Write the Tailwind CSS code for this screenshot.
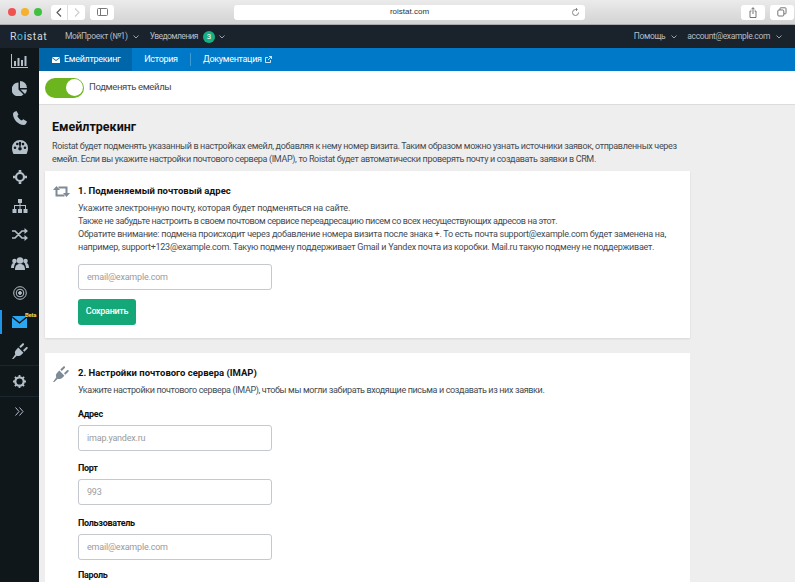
<!DOCTYPE html>
<html lang="ru">
<head>
  <meta charset="UTF-8">
  <title>Roistat</title>
  <script src="https://cdn.jsdelivr.net/npm/@tailwindcss/browser@4"></script>
</head>
<body class="h-[582px] w-[795px] overflow-hidden bg-[#eeeeee] font-['Roboto',sans-serif] text-[9px] tracking-[-0.3px] text-[#444b52]">
  <!-- safari bar -->
  <div class="flex h-[25px] items-center border-b border-[#aaa] bg-gradient-to-b from-[#ebebeb] to-[#d3d3d3] pl-[8px]">
    <div class="flex gap-[5px]">
      <span class="h-[8px] w-[8px] rounded-full bg-[#f0524f]"></span>
      <span class="h-[8px] w-[8px] rounded-full bg-[#f5b02e]"></span>
      <span class="h-[8px] w-[8px] rounded-full bg-[#3fc13f]"></span>
    </div>
    <div class="ml-[9px] flex h-[15px] w-[34px] rounded-[3px] bg-white">
      <span class="flex w-1/2 items-center justify-center border-r border-[#ddd]"><svg width="6" height="9" viewBox="0 0 6 9" fill="none" stroke="#555" stroke-width="1.1"><path d="M5 .5 1 4.500l4 4"/></svg></span>
      <span class="flex w-1/2 items-center justify-center"><svg width="6" height="9" viewBox="0 0 6 9" fill="none" stroke="#ccc" stroke-width="1.1"><path d="M1 .5l4 4-4 4"/></svg></span>
    </div>
    <div class="ml-[5px] flex h-[15px] w-[24px] items-center justify-center rounded-[3px] bg-white">
      <svg width="11" height="8" viewBox="0 0 11 8" fill="none" stroke="#777"><rect x=".5" y=".5" width="10" height="7" rx="1"/><path d="M3.500 .5v7"/></svg>
    </div>
    <div class="relative ml-[120px] flex h-[15px] w-[351px] items-center justify-center rounded-[3px] bg-white font-['Liberation_Sans',sans-serif] text-[8px] tracking-normal text-[#333]">
      roistat.com
      <svg class="absolute right-[5px] top-[3px]" width="9" height="9" viewBox="0 0 9 9" fill="none" stroke="#777" stroke-width=".9"><path d="M7.500 4.500a3 3 0 1 1-3-3h1.500M5 0l1.300 1.500L5 3"/></svg>
    </div>
    <div class="ml-[156px] flex h-[15px] w-[24px] items-center justify-center rounded-[3px] bg-white">
      <svg width="8" height="11" viewBox="0 0 8 11" fill="none" stroke="#666" stroke-width=".9"><path d="M2.500 4H1v6.500h6V4H5.500M4 7V.8M2.400 2.300 4 .7l1.600 1.600"/></svg>
    </div>
    <div class="ml-[5px] flex h-[15px] w-[24px] items-center justify-center rounded-[3px] bg-white">
      <svg width="10" height="10" viewBox="0 0 10 10" fill="none" stroke="#666" stroke-width=".9"><rect x=".8" y="3" width="6" height="6" rx="1"/><path d="M3 3V1.500a.7.7 0 0 1 .7-.7h4.600a.7.7 0 0 1 .7.7v4.600a.7.7 0 0 1-.7.7H7"/></svg>
    </div>
  </div>

  <!-- top nav -->
  <div class="flex h-[23px] items-center bg-[#1a222b] text-[8.5px] tracking-[-0.35px] text-[#b6bcc2]">
    <div class="ml-[10px] w-[55px] text-[10.5px] tracking-[.6px] text-[#d5d9dc]">R<span class="text-[#35b6e8]">o</span>istat</div>
    <div class="flex items-center gap-[5px]">МойПроект (№1)
      <svg width="6" height="4" viewBox="0 0 6 4" fill="none" stroke="#9aa2a9"><path d="M.5.5 3 3 5.500.5"/></svg>
    </div>
    <div class="ml-[11px] flex items-center tracking-[-0.6px]">Уведомления
      <span class="ml-[5px] flex h-[12px] w-[12px] items-center justify-center rounded-full bg-[#16b085] text-[8px] text-white">3</span>
      <svg class="ml-[4px]" width="6" height="4" viewBox="0 0 6 4" fill="none" stroke="#9aa2a9"><path d="M.5.5 3 3 5.500.5"/></svg>
    </div>
    <div class="ml-auto flex items-center gap-[6px]">Помощь
      <svg width="6" height="4" viewBox="0 0 6 4" fill="none" stroke="#9aa2a9"><path d="M.5.5 3 3 5.500.5"/></svg>
    </div>
    <div class="ml-[10px] mr-[13px] flex items-center gap-[6px]">account@example.com
      <svg width="6" height="4" viewBox="0 0 6 4" fill="none" stroke="#9aa2a9"><path d="M.5.5 3 3 5.500.5"/></svg>
    </div>
  </div>

  <div class="flex h-[534px]">
    <!-- sidebar -->
    <div class="flex w-[39px] shrink-0 flex-col items-center bg-[#10171b] text-[#b4c0c9]">
      <div class="flex h-[26px] items-center">
        <svg width="17" height="14" viewBox="0 0 17 14" fill="currentColor"><path d="M0 0h1v13h16v1H0z"/><path d="M3 7h2v5H3zM6.500 4h2v8h-2zM10 6h2v6h-2zM13.500 2h2v10h-2z"/></svg>
      </div>
      <div class="flex h-[29px] items-center">
        <svg width="15" height="15" viewBox="0 0 15 15" fill="currentColor"><path d="M6.500 1.500v7l5 5A7 7 0 1 1 6.500 1.500z"/><path d="M8 0a7 7 0 0 1 7 7H8z"/><path d="M8.500 8.500H15a7 7 0 0 1-2 4.500z"/></svg>
      </div>
      <div class="flex h-[29px] items-center">
        <svg width="14" height="14" viewBox="0 0 14 14" fill="currentColor"><path d="M3.500 0 5.500 3.500 4.300 5c.8 1.800 2.400 3.500 4.500 4.500L10.200 8.300 14 10.500c-.4 1.700-1.600 3.500-3.200 3.500C5 14 0 8 0 3 0 1.500 1.800.3 3.500 0z"/></svg>
      </div>
      <div class="flex h-[30px] items-center">
        <svg width="16" height="14" viewBox="0 0 16 14" fill="currentColor"><path fill-rule="evenodd" d="M8 0a8 8 0 0 1 8 8c0 2.300-.7 4.300-1.500 6h-13C.7 12.300 0 10.300 0 8a8 8 0 0 1 8-8zM3 6.500a1.300 1.300 0 1 0 0 2.600 1.300 1.300 0 0 0 0-2.600zm2.300-3.800a1.300 1.300 0 1 0 0 2.600 1.300 1.300 0 0 0 0-2.600zM8 7a1.800 1.800 0 1 0 0 3.600A1.800 1.800 0 0 0 8 7zm0-5.200a1.200 1.200 0 0 0-1.200 1.200L7.500 7h1L9.200 3A1.200 1.200 0 0 0 8 1.800zm3 1a1.300 1.300 0 1 0 0 2.600 1.300 1.300 0 0 0 0-2.600zm2 3.700a1.300 1.300 0 1 0 0 2.600 1.300 1.300 0 0 0 0-2.600z"/></svg>
      </div>
      <div class="flex h-[29px] items-center">
        <svg width="14" height="14" viewBox="0 0 14 14" fill="none" stroke="currentColor" stroke-width="2.200"><circle cx="7" cy="7" r="4"/><path d="M7 0v2.500M7 11.500V14M0 7h2.500M11.500 7H14" stroke-width="2.600"/></svg>
      </div>
      <div class="flex h-[29px] items-center">
        <svg width="16" height="14" viewBox="0 0 16 14" fill="currentColor"><path d="M6 0h4v4H8.500v2H14v4h1.500v4h-4v-4H13V7H8.500v3H10v4H6v-4h1.500V7H3v3h1.500v4h-4v-4H2V6h5.500V4H6z"/></svg>
      </div>
      <div class="flex h-[29px] items-center">
        <svg width="16" height="13" viewBox="0 0 16 13" fill="none" stroke="currentColor" stroke-width="1.700"><path d="M0 3h3l7 7h3M0 10h3l7-7h3"/><path d="M12.500 0 16 3l-3.500 3zM12.500 7 16 10l-3.500 3z" fill="currentColor" stroke="none"/></svg>
      </div>
      <div class="flex h-[29px] items-center">
        <svg width="18" height="13" viewBox="0 0 18 13" fill="currentColor"><circle cx="9" cy="3.500" r="3.200"/><path d="M4 13c0-4 1.500-6 5-6s5 2 5 6z"/><circle cx="3.500" cy="4" r="2.300"/><circle cx="14.500" cy="4" r="2.300"/><path d="M0 11c0-3 1-5 3-5 .5 0 1 .2 1.300.4C3.500 7.500 3 9 3 11zM18 11c0-3-1-5-3-5-.5 0-1 .2-1.300.4.800 1.100 1.300 2.600 1.300 4.600z"/></svg>
      </div>
      <div class="flex h-[29px] items-center">
        <svg width="14" height="14" viewBox="0 0 14 14" fill="none" stroke="currentColor"><circle cx="7" cy="7" r="6.300"/><circle cx="7" cy="7" r="3.800"/><circle cx="7" cy="7" r="1.400" fill="currentColor"/></svg>
      </div>
      <div class="relative flex h-[30px] w-full items-center justify-center">
        <span class="absolute left-0 top-[3px] h-[24px] w-[2px] bg-[#1e95e8]"></span>
        <svg width="15" height="12" viewBox="0 0 15 12" fill="#2aa6f2"><path d="M0 0h15L7.500 6z"/><path d="M0 1.800v10.200h15V1.800L7.500 7.800z"/></svg>
        <span class="absolute left-[25px] top-[5px] text-[6px] font-bold leading-none text-[#e8d44d]">Beta</span>
      </div>
      <div class="flex h-[28px] items-center">
        <svg width="16" height="16" viewBox="0 0 16 16" fill="currentColor"><path d="M0 16l3.300-4.700C2.500 9.500 2.900 8 4 6.900L6.300 4.600l5.100 5.100-2.300 2.300c-1.100 1.100-2.600 1.500-4.400.7L1.400 16z"/><path d="M7.300 3.600 10.400.5c.4-.4 1-.4 1.400 0s.4 1 0 1.400L8.700 5zM11 7.300l3.100-3.100c.4-.4 1-.4 1.400 0s.4 1 0 1.400L12.400 8.700z"/></svg>
      </div>
      <div class="flex h-[31px] w-full items-center justify-center border-t border-[#1b272e]">
        <svg width="13" height="13" viewBox="0 0 13 13"><circle cx="6.500" cy="6.500" r="4.200" fill="none" stroke="currentColor" stroke-width="2.200"/><path d="M6.500 0v13M0 6.500h13M1.900 1.900l9.200 9.200M11.100 1.900l-9.200 9.200" stroke="currentColor" stroke-width="1.800" stroke-dasharray="2.200 8.600"/></svg>
      </div>
      <div class="flex h-[29px] w-full items-center justify-center border-t border-[#1b272e]">
        <svg width="9" height="9" viewBox="0 0 9 9" fill="none" stroke="currentColor" stroke-width="1"><path d="M.5.500l3.500 4-3.500 4M4.500.500l3.500 4-3.500 4"/></svg>
      </div>
    </div>

    <div class="min-w-0 flex-1 overflow-hidden">
      <!-- tabs -->
      <div class="flex h-[23px] items-center bg-[#0079c8] text-[9px] tracking-[-0.3px] text-white">
        <div class="flex h-full w-[93px] items-center justify-start gap-[4px] bg-[#0066aa] pl-[13px]">
          <svg width="8" height="6" viewBox="0 0 8 6" fill="white"><path d="M0 0h8L4 3z"/><path d="M0 1v5h8V1L4 4z"/></svg>
          Емейлтрекинг
        </div>
        <div class="w-[58px] text-center">История</div>
        <div class="h-[13px] w-px bg-[#3d9ad6]"></div>
        <div class="ml-[12px] flex items-center gap-[3px]">Документация
          <svg width="7" height="7" viewBox="0 0 7 7" fill="none" stroke="white" stroke-width=".8"><path d="M5.500 4v2.500H.5v-5H3M3 4l3.500-3.500M4 .5h2.500V3"/></svg>
        </div>
      </div>
      <!-- toggle bar -->
      <div class="flex h-[34px] items-center border-b border-[#dcdcdc] bg-white pl-[6px]">
        <div class="flex h-[20px] w-[39px] items-center justify-end rounded-full bg-[#6cb51e] pr-[1px]">
          <span class="h-[17px] w-[17px] rounded-full bg-white"></span>
        </div>
        <span class="ml-[5px] text-[9.5px] tracking-[-0.35px]">Подменять емейлы</span>
      </div>
      <!-- content -->
      <div class="w-[651px] pl-[6px]">
        <h1 class="ml-[7px] mt-[13px] text-[12.5px] font-bold leading-[17px] tracking-normal text-[#111]">Емейлтрекинг</h1>
        <p class="ml-[7px] mt-[5px] w-[640px] leading-[13px] tracking-[-0.34px]">Roistat будет подменять указанный в настройках емейл, добавляя к нему номер визита. Таким образом можно узнать источники заявок, отправленных через емейл. Если вы укажите настройки почтового сервера (IMAP), то Roistat будет автоматически проверять почту и создавать заявки в CRM.</p>

        <section class="mt-[5px] flex h-[167px] bg-white pt-[13px] shadow-[0_1px_2px_rgba(0,0,0,.1)]">
          <div class="w-[33px] pl-[8px] pt-[2px]">
            <svg width="17" height="11" viewBox="0 0 17 11" fill="none" stroke="#7d8b96" stroke-width="2"><path d="M3.500 3v6.500h8M13.500 8V1.500h-8"/><path d="M0 4 3.500 0 7 4zM10 7l3.500 4L17 7z" fill="#7d8b96" stroke="none"/></svg>
          </div>
          <div>
            <h2 class="text-[9.5px] font-bold leading-[14px] tracking-normal text-[#111]">1. Подменяемый почтовый адрес</h2>
            <div class="mt-[4px] w-[600px] leading-[13px]">
              <p class="tracking-[-0.16px]">Укажите электронную почту, которая будет подменяться на сайте.</p>
              <p class="tracking-[-0.37px]">Также не забудьте настроить в своем почтовом сервисе переадресацию писем со всех несуществующих адресов на этот.</p>
              <p class="tracking-[-0.26px]">Обратите внимание: подмена происходит через добавление номера визита после знака +. То есть почта support@example.com будет заменена на, например, support+123@example.com. Такую подмену поддерживает Gmail и Yandex почта из коробки. Mail.ru такую подмену не поддерживает.</p>
            </div>
            <input placeholder="email@example.com" class="mt-[10px] block h-[26px] w-[194px] rounded-[3px] border border-[#c5c8cf] pl-[8px] text-[9px] tracking-[-0.2px] outline-none placeholder:text-[#9b9b9b]">
            <button class="mt-[9px] h-[26px] w-[58px] rounded-[3px] bg-[#14a878] text-[9px] font-medium text-white">Сохранить</button>
          </div>
        </section>

        <section class="mt-[15px] flex h-[229px] bg-white pt-[13px]">
          <div class="w-[33px] pl-[8px]">
            <svg width="16" height="16" viewBox="0 0 16 16" fill="#7d8b96"><path d="M0 16l3.300-4.700C2.500 9.500 2.900 8 4 6.900L6.300 4.600l5.100 5.100-2.300 2.300c-1.100 1.100-2.600 1.500-4.400.7L1.400 16z"/><path d="M7.300 3.600 10.400.5c.4-.4 1-.4 1.400 0s.4 1 0 1.400L8.700 5zM11 7.300l3.100-3.100c.4-.4 1-.4 1.400 0s.4 1 0 1.400L12.400 8.700z"/></svg>
          </div>
          <div>
            <h2 class="text-[9.5px] font-bold leading-[14px] tracking-normal text-[#111]">2. Настройки почтового сервера (IMAP)</h2>
            <p class="mt-[4px] leading-[13px] tracking-[-0.355px]">Укажите настройки почтового сервера (IMAP), чтобы мы могли забирать входящие письма и создавать из них заявки.</p>
            <label class="mt-[10px] block font-bold leading-[14px] text-[#111]">Адрес</label>
            <input placeholder="imap.yandex.ru" class="mt-[4px] block h-[26px] w-[194px] rounded-[3px] border border-[#c5c8cf] pl-[8px] text-[9px] tracking-[-0.2px] outline-none placeholder:text-[#9b9b9b]">
            <label class="mt-[10px] block font-bold leading-[14px] text-[#111]">Порт</label>
            <input placeholder="993" class="mt-[4px] block h-[26px] w-[194px] rounded-[3px] border border-[#c5c8cf] pl-[8px] text-[9px] tracking-[-0.2px] outline-none placeholder:text-[#9b9b9b]">
            <label class="mt-[11px] block font-bold leading-[14px] text-[#111]">Пользователь</label>
            <input placeholder="email@example.com" class="mt-[4px] block h-[26px] w-[194px] rounded-[3px] border border-[#c5c8cf] pl-[8px] text-[9px] tracking-[-0.2px] outline-none placeholder:text-[#9b9b9b]">
            <label class="mt-[9px] block font-bold leading-[12px] text-[#111]">Пароль</label>
          </div>
        </section>
      </div>
    </div>
  </div>
</body>
</html>
